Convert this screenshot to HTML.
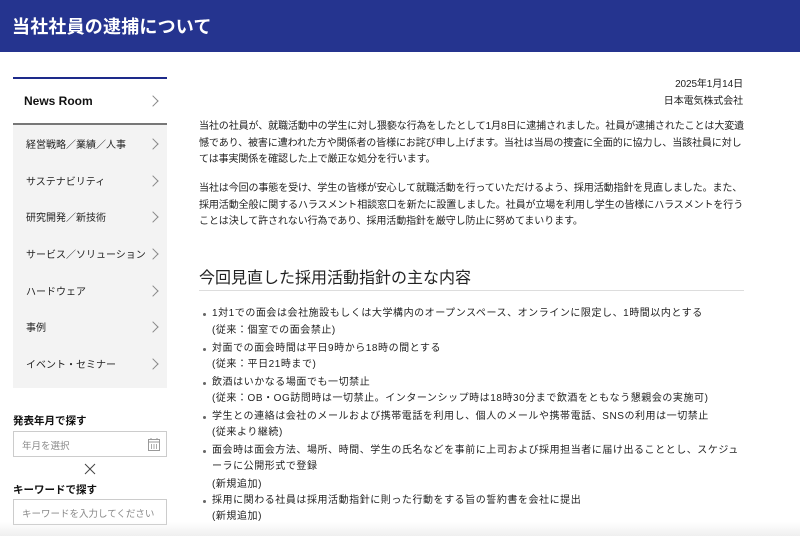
<!DOCTYPE html>
<html><head><meta charset="utf-8"><style>
*{margin:0;padding:0;box-sizing:border-box}
body{width:800px;height:536px;overflow:hidden;background:#fff;font-family:"Liberation Sans","Noto Sans CJK JP",sans-serif;color:#222;position:relative}
.hd{position:absolute;left:0;top:0;width:800px;height:52px;background:#25348f}
.hd h1{position:absolute;left:12px;top:13px;color:#fff;font-size:18px;font-weight:bold;letter-spacing:0.2px}
.t{position:absolute;white-space:nowrap;font-size:10px;line-height:14px;letter-spacing:-0.1px}
.u{letter-spacing:0.55px}
.nav{position:absolute;left:13px;top:125px;width:154px;height:263px;background:#f3f3f3}
.it{position:absolute;left:26px;font-size:10px;white-space:nowrap;line-height:14px}
.ch{position:absolute;left:149px;width:8px;height:8px;border-right:1px solid #888;border-top:1px solid #888;transform:rotate(45deg)}
.inp{position:absolute;left:13px;width:154px;height:26px;border:1px solid #ccc;background:#fff}
.inp span{position:absolute;left:8px;top:6px;font-size:9.5px;color:#888;white-space:nowrap}
.b{position:absolute;left:203px;width:3px;height:3px;border-radius:50%;background:#666}
</style></head><body>
<div class="hd"><h1>当社社員の逮捕について</h1></div>

<div style="position:absolute;left:13px;top:77px;width:154px;height:2px;background:#1d2a8a"></div>
<div style="position:absolute;left:24px;top:94px;font-size:12px;font-weight:bold;color:#111">News Room</div>
<div class="ch" style="top:97px"></div>
<div style="position:absolute;left:13px;top:123px;width:154px;height:2px;background:#777"></div>
<div class="nav"></div>
<div class="it" style="top:139px">経営戦略／業績／人事</div><div class="ch" style="top:140px"></div>
<div class="it" style="top:176px">サステナビリティ</div><div class="ch" style="top:177px"></div>
<div class="it" style="top:212px">研究開発／新技術</div><div class="ch" style="top:213px"></div>
<div class="it" style="top:249px">サービス／ソリューション</div><div class="ch" style="top:250px"></div>
<div class="it" style="top:286px">ハードウェア</div><div class="ch" style="top:287px"></div>
<div class="it" style="top:322px">事例</div><div class="ch" style="top:323px"></div>
<div class="it" style="top:359px">イベント・セミナー</div><div class="ch" style="top:360px"></div>

<div style="position:absolute;left:13px;top:413px;font-size:10.5px;font-weight:bold;color:#111">発表年月で探す</div>
<div class="inp" style="top:431px"><span>年月を選択</span>
<svg style="position:absolute;left:134px;top:6px" width="12" height="13" viewBox="0 0 12 13"><rect x="0.5" y="1.5" width="11" height="11" fill="none" stroke="#999"/><line x1="0.5" y1="4" x2="11.5" y2="4" stroke="#999"/><line x1="3" y1="0" x2="3" y2="2" stroke="#999"/><line x1="9" y1="0" x2="9" y2="2" stroke="#999"/><path d="M3.5 6v5M6 6v5M8.5 6v5" stroke="#aaa"/></svg></div>
<svg style="position:absolute;left:84px;top:463px" width="12" height="12"><path d="M1 1L11 11M11 1L1 11" stroke="#444" stroke-width="1"/></svg>
<div style="position:absolute;left:13px;top:482px;font-size:10.5px;font-weight:bold;color:#111">キーワードで探す</div>
<div class="inp" style="top:499px"><span>キーワードを入力してください</span></div>

<div class="t" style="right:57px;top:78px">2025年1月14日</div>
<div class="t" style="right:57px;top:95px">日本電気株式会社</div>

<div class="t" style="left:199px;top:120px">当社の社員が、就職活動中の学生に対し猥褻な行為をしたとして1月8日に逮捕されました。社員が逮捕されたことは大変遺</div>
<div class="t" style="left:199px;top:137px">憾であり、被害に遭われた方や関係者の皆様にお詫び申し上げます。当社は当局の捜査に全面的に協力し、当該社員に対し</div>
<div class="t" style="left:199px;top:153px">ては事実関係を確認した上で厳正な処分を行います。</div>
<div class="t" style="left:199px;top:182px">当社は今回の事態を受け、学生の皆様が安心して就職活動を行っていただけるよう、採用活動指針を見直しました。また、</div>
<div class="t" style="left:199px;top:199px">採用活動全般に関するハラスメント相談窓口を新たに設置しました。社員が立場を利用し学生の皆様にハラスメントを行う</div>
<div class="t" style="left:199px;top:215px">ことは決して許されない行為であり、採用活動指針を厳守し防止に努めてまいります。</div>

<div style="position:absolute;left:199px;top:264px;font-size:16px;white-space:nowrap;color:#222">今回見直した採用活動指針の主な内容</div>
<div style="position:absolute;left:199px;top:290px;width:545px;height:1px;background:#ddd"></div>

<div class="b" style="top:313px"></div><div class="t u" style="left:212px;top:307px">1対1での面会は会社施設もしくは大学構内のオープンスペース、オンラインに限定し、1時間以内とする</div>
<div class="t u" style="left:212px;top:324px">(従来：個室での面会禁止)</div>
<div class="b" style="top:348px"></div><div class="t u" style="left:212px;top:342px">対面での面会時間は平日9時から18時の間とする</div>
<div class="t u" style="left:212px;top:358px">(従来：平日21時まで)</div>
<div class="b" style="top:382px"></div><div class="t u" style="left:212px;top:376px">飲酒はいかなる場面でも一切禁止</div>
<div class="t u" style="left:212px;top:392px">(従来：OB・OG訪問時は一切禁止。インターンシップ時は18時30分まで飲酒をともなう懇親会の実施可)</div>
<div class="b" style="top:416px"></div><div class="t u" style="left:212px;top:410px">学生との連絡は会社のメールおよび携帯電話を利用し、個人のメールや携帯電話、SNSの利用は一切禁止</div>
<div class="t u" style="left:212px;top:426px">(従来より継続)</div>
<div class="b" style="top:450px"></div><div class="t u" style="left:212px;top:444px">面会時は面会方法、場所、時間、学生の氏名などを事前に上司および採用担当者に届け出ることとし、スケジュ</div>
<div class="t u" style="left:212px;top:460px">ーラに公開形式で登録</div>
<div class="t u" style="left:212px;top:478px">(新規追加)</div>
<div class="b" style="top:500px"></div><div class="t u" style="left:212px;top:494px">採用に関わる社員は採用活動指針に則った行動をする旨の誓約書を会社に提出</div>
<div class="t u" style="left:212px;top:510px">(新規追加)</div>
<div style="position:absolute;left:0;top:522px;width:800px;height:14px;background:linear-gradient(rgba(255,255,255,0),rgba(235,235,235,0.8))"></div>
</body></html>
